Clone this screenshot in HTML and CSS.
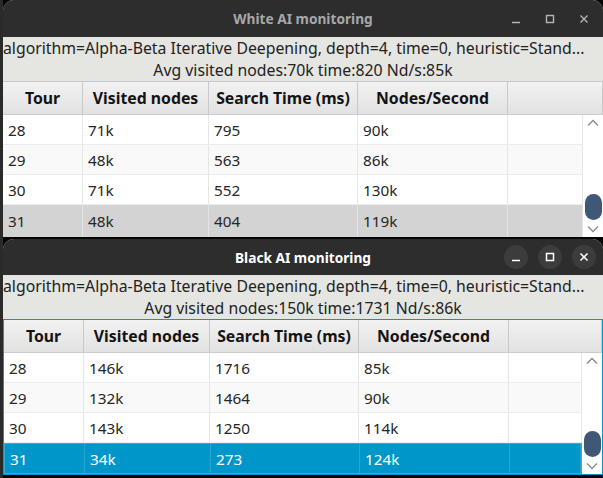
FILE: index.html
```html
<!DOCTYPE html>
<html>
<head>
<meta charset="utf-8">
<link rel="stylesheet" href="styles.css">
</head>
<body>
<div class="screen">
  <section class="win">
    <header class="titlebar unfocused">
      <span class="title">White AI monitoring</span>
      <div class="controls">
        <span class="btn"><svg width="10" height="10" viewBox="0 0 10 10"><path d="M1 8.5H9" /></svg></span>
        <span class="btn"><svg width="10" height="10" viewBox="0 0 10 10"><rect x="1.5" y="1.5" width="7" height="7" /></svg></span>
        <span class="btn"><svg width="10" height="10" viewBox="0 0 10 10"><path d="M1.5 1.5L8.5 8.5M8.5 1.5L1.5 8.5" /></svg></span>
      </div>
    </header>
    <div class="info">
      <div class="line clipped">algorithm=Alpha-Beta Iterative Deepening, depth=4, time=0, heuristic=Stand...</div>
      <div class="line">Avg visited nodes:70k time:820 Nd/s:85k</div>
    </div>
    <div class="table">
      <div class="thead">
        <div class="th">Tour</div>
        <div class="th">Visited nodes</div>
        <div class="th">Search Time (ms)</div>
        <div class="th">Nodes/Second</div>
        <div class="th"></div>
      </div>
      <div class="tbody top-body">
        <div class="rows">
          <div class="tr"><div class="td">28</div><div class="td">71k</div><div class="td">795</div><div class="td">90k</div><div class="td"></div></div>
          <div class="tr odd"><div class="td">29</div><div class="td">48k</div><div class="td">563</div><div class="td">86k</div><div class="td"></div></div>
          <div class="tr"><div class="td">30</div><div class="td">71k</div><div class="td">552</div><div class="td">130k</div><div class="td"></div></div>
          <div class="tr sel-grey"><div class="td">31</div><div class="td">48k</div><div class="td">404</div><div class="td">119k</div><div class="td"></div></div>
        </div>
        <div class="vscroll">
          <svg class="arrow" width="12" height="8" viewBox="0 0 12 8"><path d="M1 6.5L6 1.5L11 6.5" /></svg>
          <div class="thumb"></div>
          <svg class="arrow" width="12" height="8" viewBox="0 0 12 8"><path d="M1 1.5L6 6.5L11 1.5" /></svg>
        </div>
      </div>
    </div>
  </section>

  <section class="win">
    <header class="titlebar focused">
      <span class="title">Black AI monitoring</span>
      <div class="controls">
        <span class="btn"><svg width="10" height="10" viewBox="0 0 10 10"><path d="M1 8.5H9" /></svg></span>
        <span class="btn"><svg width="10" height="10" viewBox="0 0 10 10"><rect x="1.5" y="1.5" width="7" height="7" /></svg></span>
        <span class="btn"><svg width="10" height="10" viewBox="0 0 10 10"><path d="M1.5 1.5L8.5 8.5M8.5 1.5L1.5 8.5" /></svg></span>
      </div>
    </header>
    <div class="info">
      <div class="line clipped">algorithm=Alpha-Beta Iterative Deepening, depth=4, time=0, heuristic=Stand...</div>
      <div class="line">Avg visited nodes:150k time:1731 Nd/s:86k</div>
    </div>
    <div class="table focus">
      <div class="thead">
        <div class="th">Tour</div>
        <div class="th">Visited nodes</div>
        <div class="th">Search Time (ms)</div>
        <div class="th">Nodes/Second</div>
        <div class="th"></div>
      </div>
      <div class="tbody bottom-body">
        <div class="rows">
          <div class="tr"><div class="td">28</div><div class="td">146k</div><div class="td">1716</div><div class="td">85k</div><div class="td"></div></div>
          <div class="tr odd"><div class="td">29</div><div class="td">132k</div><div class="td">1464</div><div class="td">90k</div><div class="td"></div></div>
          <div class="tr"><div class="td">30</div><div class="td">143k</div><div class="td">1250</div><div class="td">114k</div><div class="td"></div></div>
          <div class="tr sel-blue"><div class="td">31</div><div class="td">34k</div><div class="td">273</div><div class="td">124k</div><div class="td"></div></div>
        </div>
        <div class="vscroll">
          <svg class="arrow" width="12" height="8" viewBox="0 0 12 8"><path d="M1 6.5L6 1.5L11 6.5" /></svg>
          <div class="thumb"></div>
          <svg class="arrow" width="12" height="8" viewBox="0 0 12 8"><path d="M1 1.5L6 6.5L11 1.5" /></svg>
        </div>
      </div>
    </div>
  </section>
</div>
</body>
</html>
```

FILE: styles.css
```css
* { box-sizing: border-box; }
html, body {
  margin: 0;
  padding: 0;
  width: 603px;
  height: 478px;
  overflow: hidden;
  background: #050505;
  font-family: "Noto Sans", "Open Sans", sans-serif;
}
.screen {
  display: flex;
  flex-direction: column;
  gap: 2px;
  padding-left: 3px;
  height: 478px;
  background: linear-gradient(to right, #2a2a2a 0, #2a2a2a 3px, #050505 3px);
}
.win {
  display: flex;
  flex-direction: column;
  background: #e5e5e1;
  border-radius: 11px 11px 0 0;
  overflow: hidden;
}
.titlebar {
  height: 37px;
  background: #2d2d2d;
  display: grid;
  grid-template-columns: 1fr auto 1fr;
  align-items: center;
}
.focused { height: 36px; }
.title {
  grid-column: 2;
  font-weight: bold;
  font-size: 13.7px;
  color: #a8a8a8;
}
.focused .title { color: #ffffff; }
.controls {
  grid-column: 3;
  justify-self: end;
  display: flex;
  gap: 10px;
  margin-right: 7px;
}
.btn {
  width: 24px;
  height: 24px;
  border-radius: 50%;
  display: flex;
  align-items: center;
  justify-content: center;
}
.focused .btn { background: #3c3c3c; }
.btn svg { fill: none; stroke: #b5b5b5; stroke-width: 1.4; }
.focused .btn svg { stroke: #ffffff; stroke-width: 1.5; }
.info {
  height: 44px;
  padding-top: 0;
  display: flex;
  flex-direction: column;
  align-items: center;
  color: #222222;
  font-size: 15.8px;
  line-height: 22px;
  white-space: nowrap;
  overflow: hidden;
}
.line.clipped { align-self: flex-start; }
.table {
  display: flex;
  flex-direction: column;
  background: #ffffff;
  border-top: 1px solid #c8c8c8;
}
.table.focus {
  border: 1px solid #0a96c8;
  border-bottom-width: 1px;
}
.thead {
  display: grid;
  grid-template-columns: 80px 126px 149px 150px 1fr;
  height: 33px;
  background: linear-gradient(#f2f2f2, #e2e2e2);
  border-bottom: 1px solid #cbcbcb;
}
.th {
  display: flex;
  align-items: center;
  justify-content: center;
  font-weight: bold;
  font-size: 15.8px;
  color: #141414;
  border-right: 1px solid #c9c9c9;
}
.tbody {
  display: flex;
  overflow: hidden;
}
.top-body { height: 122px; }
.bottom-body { height: 121px; }
.rows {
  flex: 1;
  display: flex;
  flex-direction: column;
}
.tr {
  display: grid;
  grid-template-columns: 80px 126px 149px 150px 1fr;
  height: 30px;
  flex: none;
  background: #ffffff;
  border-bottom: 1px solid #ececec;
}
.tr.odd { background: #f9f9f9; }
.td {
  display: flex;
  align-items: center;
  padding-left: 5px;
  font-size: 15.3px;
  color: #262626;
  border-right: 1px solid #e6e6e6;
}
.tr.sel-grey {
  background: #d3d3d3;
  height: 32px;
  border-bottom: none;
}
.tr.sel-grey .td { border-right-color: #e4e4e4; }
.tr.sel-blue {
  background: #0096c9;
  height: 31px;
  border: 1px solid #3aa9d6;
}
.tr.sel-blue .td {
  color: #ffffff;
  border-right-color: #2aa3d2;
}
.vscroll {
  width: 20px;
  flex: none;
  background: #ffffff;
  display: flex;
  flex-direction: column;
  align-items: center;
  padding: 4px 0 4px;
}
.arrow { fill: none; stroke: #8a8a8a; stroke-width: 1.3; flex: none; }
.thumb {
  margin-top: auto;
  margin-bottom: 5px;
  width: 17px;
  height: 26px;
  border-radius: 9px;
  background: #3f5878;
  margin-left: 1px;
}
```
